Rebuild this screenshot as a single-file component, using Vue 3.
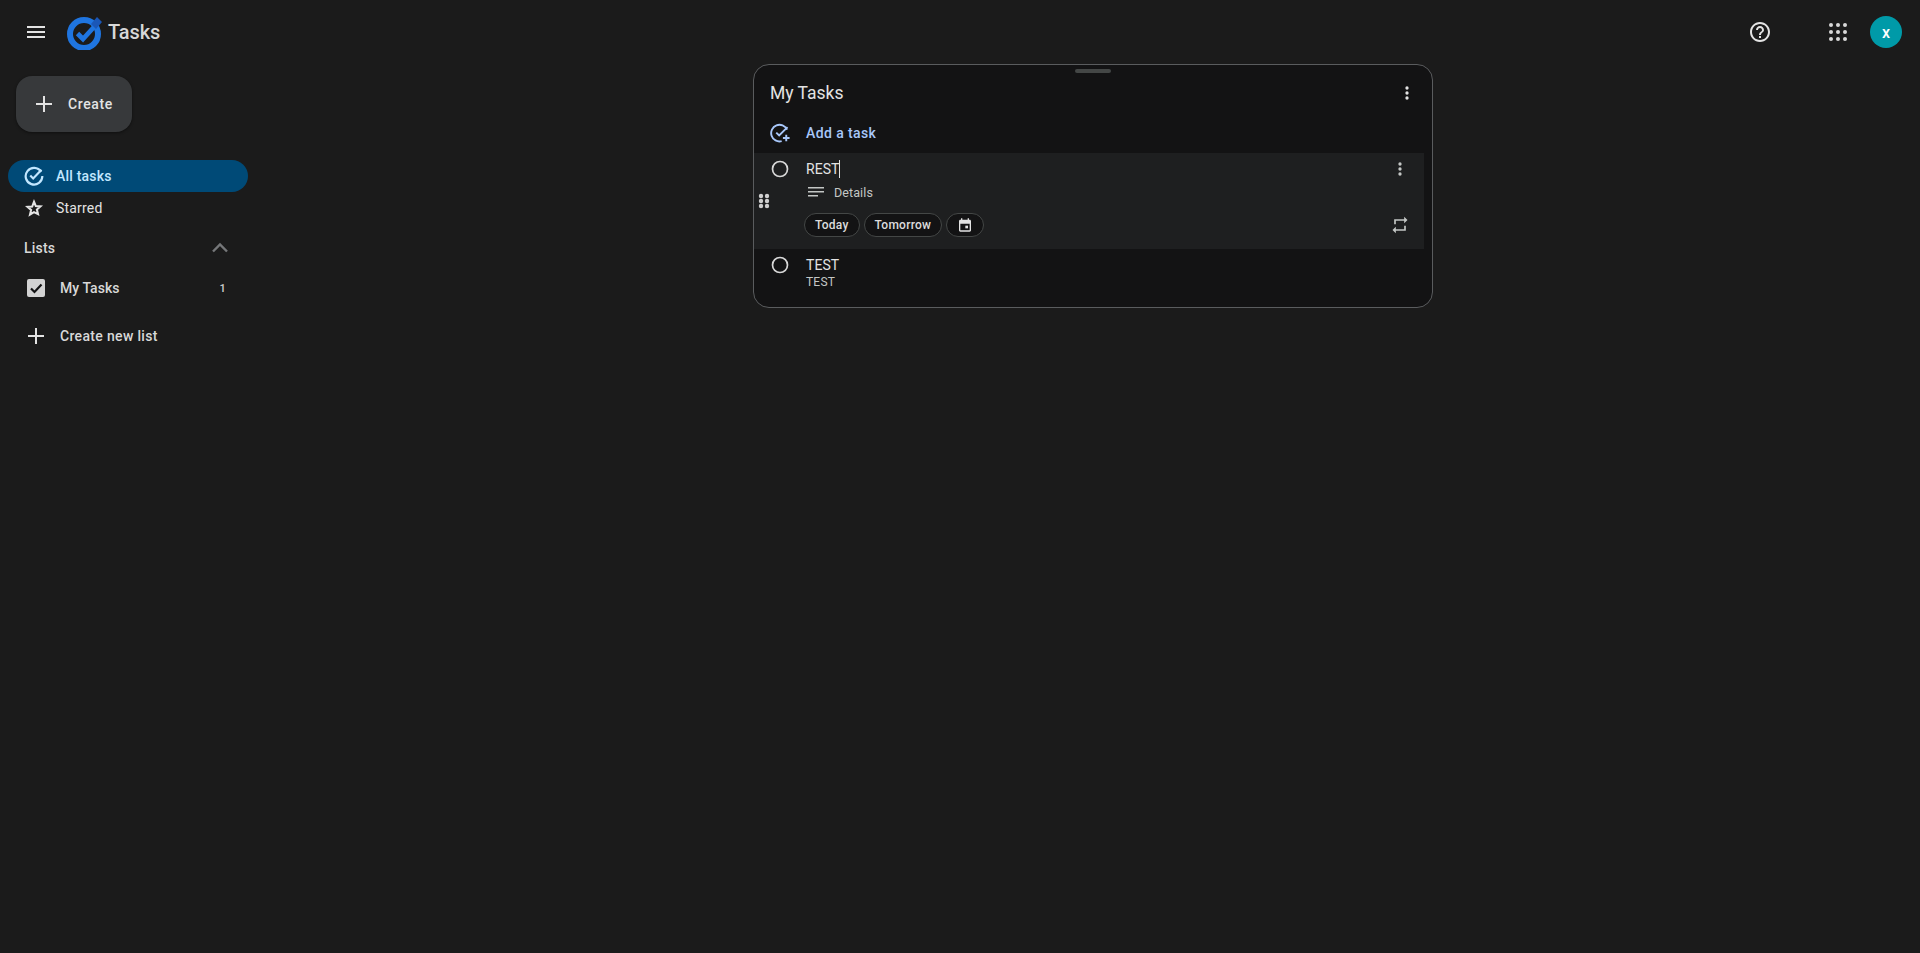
<script setup>
const kebab = [6, 12, 18]
const gridDots = [5, 12, 19]
</script>

<template>
  <div class="page">
    <header class="topbar">
      <button class="menu" aria-label="Main menu">
        <svg width="24" height="24" viewBox="0 0 24 24"><path fill="#e3e3e3" d="M3 18h18v-2H3v2zm0-5h18v-2H3v2zm0-7v2h18V6H3z"/></svg>
      </button>
      <svg class="logo" width="36" height="36" viewBox="0 0 36 36">
        <circle cx="17" cy="20" r="14" fill="none" stroke="#1f75e0" stroke-width="6"/>
        <path d="M10.500 19.500l5.500 5.500 11-12" fill="none" stroke="#1f75e0" stroke-width="4.800"/>
        <path d="M24 10l6-7 5 5-6 7z" fill="#1a57b8"/>
      </svg>
      <span class="brand">Tasks</span>
      <div class="top-right">
        <svg class="help" width="24" height="24" viewBox="0 0 24 24"><path fill="#e3e3e3" d="M11 18h2v-2h-2v2zm1-16C6.480 2 2 6.480 2 12s4.480 10 10 10 10-4.480 10-10S17.520 2 12 2zm0 18c-4.410 0-8-3.590-8-8s3.590-8 8-8 8 3.590 8 8-3.590 8-8 8zm0-14c-2.210 0-4 1.790-4 4h2c0-1.100.9-2 2-2s2 .9 2 2c0 2-3 1.750-3 5h2c0-2.250 3-2.500 3-5 0-2.210-1.790-4-4-4z"/></svg>
        <svg class="apps" width="24" height="24" viewBox="0 0 24 24">
          <template v-for="y in gridDots" :key="y">
            <circle v-for="x in gridDots" :key="x" :cx="x" :cy="y" r="2" fill="#d8d8d8"/>
          </template>
        </svg>
        <div class="avatar">x</div>
      </div>
    </header>

    <div class="body">
      <aside class="sidebar">
        <button class="create">
          <svg width="24" height="24" viewBox="0 0 24 24"><path fill="#e3e3e3" d="M20 13h-7v7h-2v-7H4v-2h7V4h2v7h7z"/></svg>
          <span>Create</span>
        </button>
        <nav class="nav">
          <div class="nav-item active">
            <svg width="20" height="20" viewBox="0 0 24 24"><path fill="none" stroke="#c2e7ff" stroke-width="2.600" d="M20.500 7A10 10 0 1 0 22 12"/><path fill="none" stroke="#c2e7ff" stroke-width="2.600" d="M7.500 11.500l3.500 3.500 10-10.500"/></svg>
            <span>All tasks</span>
          </div>
          <div class="nav-item">
            <svg width="20" height="20" viewBox="0 0 24 24"><path fill="none" stroke="#e3e3e3" stroke-width="2.500" stroke-linejoin="miter" d="M12 4.500l2.150 5.200 5.600.45-4.270 3.680 1.300 5.470L12 16.900 7.220 19.800l1.300-5.470-4.270-3.680 5.600-.45z"/></svg>
            <span>Starred</span>
          </div>
        </nav>
        <div class="lists-head">
          <span>Lists</span>
          <svg width="24" height="24" viewBox="0 0 24 24"><path fill="none" stroke="#757779" stroke-width="2.400" d="M5 15.500l7-7 7 7"/></svg>
        </div>
        <div class="list-row">
          <svg width="24" height="24" viewBox="0 0 24 24"><rect x="3" y="3" width="18" height="18" rx="2" fill="#d3d3d3"/><path fill="none" stroke="#131314" stroke-width="2.200" d="M7 12.500l3.500 3.500 7-7.500"/></svg>
          <span class="list-name">My Tasks</span>
          <span class="count">1</span>
        </div>
        <div class="list-row new-list">
          <svg width="24" height="24" viewBox="0 0 24 24"><path fill="#e3e3e3" d="M20 13h-7v7h-2v-7H4v-2h7V4h2v7h7z"/></svg>
          <span class="list-name wide">Create new list</span>
        </div>
      </aside>

      <main class="main">
        <section class="card">
          <div class="grab"></div>
          <div class="card-head">
            <h1>My Tasks</h1>
            <svg width="20" height="20" viewBox="0 0 24 24"><circle v-for="y in kebab" :key="y" cx="12" :cy="y" r="2" fill="#e3e3e3"/></svg>
          </div>
          <div class="add-row">
            <svg width="20" height="20" viewBox="0 0 24 24"><path fill="none" stroke="#a8c7fa" stroke-width="2.300" d="M20.500 8A10 10 0 1 0 14 21.800"/><path fill="none" stroke="#a8c7fa" stroke-width="2.300" d="M7.500 11.500l3.500 3.500 10-10"/><path fill="none" stroke="#a8c7fa" stroke-width="2.300" d="M19.500 14v8M15.500 18h8"/></svg>
            <span>Add a task</span>
          </div>

          <div class="task open">
            <svg class="drag" width="12" height="16" viewBox="0 0 12 16"><g fill="#d0d0d0"><circle cx="3" cy="3" r="2.200"/><circle cx="9" cy="3" r="2.200"/><circle cx="3" cy="8" r="2.200"/><circle cx="9" cy="8" r="2.200"/><circle cx="3" cy="13" r="2.200"/><circle cx="9" cy="13" r="2.200"/></g></svg>
            <svg class="radio" width="20" height="20" viewBox="0 0 20 20"><circle cx="10" cy="10" r="7.500" fill="none" stroke="#d8d8d8" stroke-width="1.700"/></svg>
            <div class="task-body">
              <div class="title-line">
                <span class="task-title editing">REST</span>
                <svg width="20" height="20" viewBox="0 0 24 24"><circle v-for="y in kebab" :key="y" cx="12" :cy="y" r="2" fill="#c4c7c5"/></svg>
              </div>
              <div class="details">
                <svg width="16" height="10" viewBox="0 0 16 10"><path fill="#c4c7c5" d="M0 0h16v1.500H0zM0 4h16v1.500H0zM0 8h10v1.500H0z"/></svg>
                <span>Details</span>
              </div>
              <div class="chips-line">
                <div class="chips">
                  <span class="chip">Today</span>
                  <span class="chip">Tomorrow</span>
                  <span class="chip cal">
                    <svg width="16" height="16" viewBox="0 0 24 24"><path fill="#e3e3e3" d="M19 4h-1V2h-2v2H8V2H6v2H5c-1.100 0-2 .9-2 2v14c0 1.100.9 2 2 2h14c1.100 0 2-.9 2-2V6c0-1.100-.9-2-2-2zm0 16H5V10h14v10z"/><rect x="12.500" y="13" width="4" height="4" fill="#e3e3e3"/></svg>
                  </span>
                </div>
                <svg width="20" height="20" viewBox="0 0 24 24"><path fill="#c4c7c5" d="M7 7h10v3l4-4-4-4v3H5v6h2V7zm10 10H7v-3l-4 4 4 4v-3h12v-6h-2v4z"/></svg>
              </div>
            </div>
          </div>

          <div class="task">
            <svg class="radio" width="20" height="20" viewBox="0 0 20 20"><circle cx="10" cy="10" r="7.500" fill="none" stroke="#d8d8d8" stroke-width="1.700"/></svg>
            <div class="task-body">
              <div class="title-line"><span class="task-title">TEST</span></div>
              <div class="sub">TEST</div>
            </div>
          </div>
        </section>
      </main>
    </div>
  </div>
</template>

<style>
html, body { margin: 0; background: #1b1b1b; }
</style>

<style scoped>
.page {
  height: 953px;
  overflow: hidden;
  background: #1b1b1b;
  color: #e3e3e3;
  font-family: Roboto, "Liberation Sans", sans-serif;
  font-size: 14px;
  letter-spacing: .2px;
}
svg { display: block; flex: none; }

.topbar { height: 64px; display: flex; align-items: center; }
.menu { width: 48px; height: 48px; margin-left: 12px; padding: 12px; background: none; border: 0; }
.logo { margin-left: 7px; }
.brand { margin-left: 5px; font-size: 20px; font-weight: 500; letter-spacing: -0.1px; color: #d8d8d8; }
.top-right { margin-left: auto; display: flex; align-items: center; padding-right: 18px; }
.apps { margin-left: 54px; }
.avatar {
  width: 32px; height: 32px; margin-left: 20px; border-radius: 50%;
  background: #009aa8; color: #fff; font-weight: 500; font-size: 16px;
  display: flex; align-items: center; justify-content: center;
}

.body { display: flex; }
.sidebar { width: 256px; flex: none; }
.create {
  display: flex; align-items: center; gap: 12px;
  width: 116px; height: 56px; margin: 12px 0 0 16px; padding: 0 0 0 16px;
  border: 0; border-radius: 16px; background: #37393b;
  box-shadow: 0 1px 3px rgba(0,0,0,.45);
  color: #e3e3e3; font: 500 14px Roboto, sans-serif; letter-spacing: .6px;
}
.nav { margin: 28px 8px 0; width: 240px; }
.nav-item {
  height: 32px; display: flex; align-items: center; gap: 12px;
  padding-left: 16px; border-radius: 16px; font-size: 14px;
}
.nav-item.active { background: #004a77; color: #c2e7ff; font-weight: 500; }
.lists-head {
  height: 32px; margin-top: 8px; padding: 0 24px 0 24px;
  display: flex; align-items: center; justify-content: space-between;
  font-weight: 500; color: #d8d8d8;
}
.list-row { height: 32px; margin-top: 8px; padding: 0 30px 0 24px; display: flex; align-items: center; gap: 12px; }
.new-list { margin-top: 16px; }
.list-name { font-weight: 500; letter-spacing: .05px; color: #d8d8d8; }
.list-name.wide { letter-spacing: .33px; }
.count { margin-left: auto; font-size: 11px; font-weight: 500; color: #d0d0d0; }

.main { flex: 1; padding-left: 497px; }
.card {
  position: relative; box-sizing: border-box; width: 680px; height: 244px;
  background: #131314; border: 1px solid #5a5c5e; border-radius: 16px;
}
.grab {
  position: absolute; top: 4px; left: 321px;
  width: 36px; height: 4px; border-radius: 2px; background: #444746;
}
.card-head {
  height: 40px; padding: 8px 15px 0 16px; display: flex; align-items: center; justify-content: space-between;
}
.card-head h1 { margin: 0; font-size: 17.500px; font-weight: 400; letter-spacing: 0; color: #e3e3e3; }
.add-row {
  height: 40px; padding-left: 16px; display: flex; align-items: center; gap: 16px;
  color: #a8c7fa; font-weight: 500; letter-spacing: .4px;
}
.task { position: relative; display: flex; gap: 16px; padding: 0 14px 0 16px; margin-right: 8px; }
.task.open { background: #1e1f20; height: 96px; }
.drag { position: absolute; left: 4px; top: 40px; }
.radio { margin-top: 6px; }
.task-body { flex: 1; }
.title-line { height: 32px; display: flex; align-items: center; justify-content: space-between; }
.task-title { font-size: 14px; letter-spacing: .05px; color: #e3e3e3; }
.editing { border-right: 1px solid #e3e3e3; line-height: 18px; }
.details {
  height: 16px; margin-top: -1px; display: flex; align-items: center; gap: 10px; padding-left: 2px;
  font-size: 12.500px; letter-spacing: .1px; color: #c4c7c5;
}
.chips-line { margin-top: 13px; display: flex; align-items: center; justify-content: space-between; }
.chips { display: flex; gap: 4px; margin-left: -2px; }
.chip {
  box-sizing: border-box; height: 24px; padding: 0 10px;
  display: flex; align-items: center;
  background: #131314; border: 1px solid #444746; border-radius: 12px;
  font-size: 12px; font-weight: 500; letter-spacing: .25px; color: #dcdcdc;
}
.chip.cal { width: 38px; padding: 0; justify-content: center; }
.sub { margin-top: -7px; font-size: 12px; color: #c4c7c5; line-height: 16px; }
</style>
